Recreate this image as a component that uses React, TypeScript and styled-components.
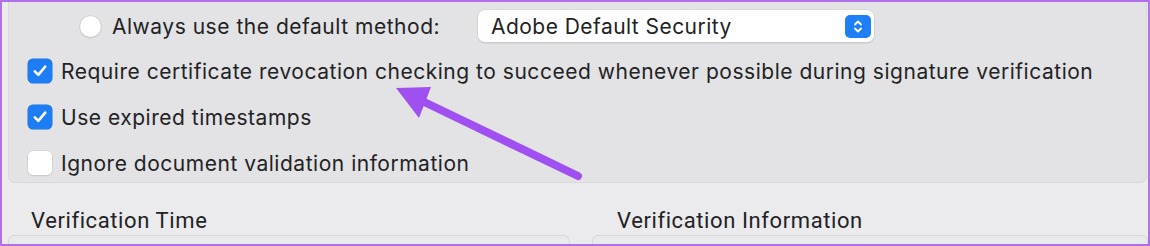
import React from "react";
import styled, { createGlobalStyle } from "styled-components";

const Global = createGlobalStyle`
  html, body { margin: 0; padding: 0; background: #ececee; }
  body { font-family: "Inter", "Liberation Sans", sans-serif; }
`;

const Frame = styled.div`
  position: relative;
  width: 1150px;
  height: 246px;
  box-sizing: border-box;
  border: 2px solid #b16fea;
  background: #ebebed;
  overflow: hidden;
  display: flex;
  flex-direction: column;
`;

const GroupBox = styled.div`
  margin: -2px 1px 0 6px;
  height: 183px;
  box-sizing: border-box;
  background: #e3e3e5;
  border: 1px solid #d9d9db;
  border-top: none;
  border-radius: 0 0 7px 7px;
  display: flex;
  flex-direction: column;
  padding: 10px 0 0 19px;
`;

const RadioRow = styled.div`
  display: flex;
  align-items: center;
  height: 32px;
  padding-left: 52px;
`;

const Radio = styled.span`
  width: 21px;
  height: 21px;
  border-radius: 50%;
  background: #ffffff;
  box-shadow: 0 0 0 0.5px #c4c4c6, 0 1px 1.5px rgba(0, 0, 0, 0.15);
  flex-shrink: 0;
`;

const Label = styled.span<{ $gap: number }>`
  margin-left: ${(p) => p.$gap}px;
  font-size: 21px;
  color: #222224;
  white-space: nowrap;
  letter-spacing: 0.52px;
`;

const Select = styled.div`
  margin-left: 38px;
  width: 396px;
  height: 32px;
  box-sizing: border-box;
  background: #ffffff;
  border-radius: 7px;
  box-shadow: 0 0 0 0.5px #cfcfd1, 0 1px 2px rgba(0, 0, 0, 0.18);
  display: flex;
  align-items: center;
  justify-content: space-between;
  padding: 0 3px 0 13px;
`;

const SelectText = styled.span`
  font-size: 21px;
  color: #222224;
  letter-spacing: 0.45px;
`;

const Stepper = styled.span`
  width: 26px;
  height: 23px;
  border-radius: 5px;
  background: #1f7ff4;
  display: flex;
  align-items: center;
  justify-content: center;
`;

const CheckRow = styled.div`
  display: flex;
  align-items: center;
  height: 46px;
`;

const Box = styled.span<{ $checked: boolean }>`
  width: 24px;
  height: 24px;
  box-sizing: border-box;
  border-radius: 5px;
  flex-shrink: 0;
  display: flex;
  align-items: center;
  justify-content: center;
  background: ${(p) => (p.$checked ? "#1c7df5" : "#ffffff")};
  box-shadow: ${(p) =>
    p.$checked
      ? "0 0 0 0.5px #1a6fd8"
      : "0 0 0 0.5px #c8c8ca, 0 1px 1.5px rgba(0,0,0,0.12)"};
`;

const Checks = styled.div`
  display: flex;
  flex-direction: column;
  margin-top: 6px;
`;

const Bottom = styled.div`
  display: grid;
  grid-template-columns: 582px 1fr;
  flex: 1;
`;

const Column = styled.div`
  display: flex;
  flex-direction: column;
`;

const ColTitle = styled.div<{ $pad: number }>`
  font-family: "Roboto", "Liberation Sans", sans-serif;
  font-size: 22px;
  letter-spacing: 0.6px;
  color: #222224;
  padding: 25px 0 0 ${(p) => p.$pad}px;
  height: 27px;
`;

const Panel = styled.div<{ $l: number; $r: number }>`
  margin: 0 ${(p) => p.$r}px 0 ${(p) => p.$l}px;
  flex: 1;
  background: #e9e9eb;
  border: 1px solid #d8d8da;
  border-bottom: none;
  border-radius: 6px 6px 0 0;
`;

const ArrowSvg = styled.svg`
  position: absolute;
  left: -2px;
  top: -2px;
  pointer-events: none;
`;

const Check = () => (
  <svg width="16" height="16" viewBox="0 0 16 16">
    <path
      d="M2.8 8.3 L6.3 11.8 L13.2 3.6"
      fill="none"
      stroke="#fff"
      strokeWidth="2.6"
      strokeLinecap="round"
      strokeLinejoin="round"
    />
  </svg>
);

const Chevrons = () => (
  <svg width="12" height="17" viewBox="0 0 12 17">
    <path
      d="M3 6.5 L6 3.5 L9 6.5 M3 10.5 L6 13.5 L9 10.5"
      fill="none"
      stroke="#fff"
      strokeWidth="1.8"
      strokeLinecap="round"
      strokeLinejoin="round"
    />
  </svg>
);

const items: { label: string; checked: boolean }[] = [
  {
    label:
      "Require certificate revocation checking to succeed whenever possible during signature verification",
    checked: true,
  },
  { label: "Use expired timestamps", checked: true },
  { label: "Ignore document validation information", checked: false },
];

export default function App() {
  return (
    <>
      <Global />
      <Frame>
        <GroupBox>
          <RadioRow>
            <Radio />
            <Label $gap={11}>Always use the default method:</Label>
            <Select>
              <SelectText>Adobe Default Security</SelectText>
              <Stepper>
                <Chevrons />
              </Stepper>
            </Select>
          </RadioRow>
          <Checks>
            {items.map((it) => (
              <CheckRow key={it.label}>
                <Box $checked={it.checked}>{it.checked && <Check />}</Box>
                <Label $gap={9}>{it.label}</Label>
              </CheckRow>
            ))}
          </Checks>
        </GroupBox>
        <Bottom>
          <Column>
            <ColTitle $pad={29}>Verification Time</ColTitle>
            <Panel $l={6} $r={14} />
          </Column>
          <Column>
            <ColTitle $pad={33}>Verification Information</ColTitle>
            <Panel $l={8} $r={0} />
          </Column>
        </Bottom>
        <ArrowSvg width="1150" height="246" viewBox="0 0 1150 246">
          <path d="M396 88 L431 87 L419 118 Z" fill="#a04ff0" />
          <path
            d="M418 99 L578 176"
            stroke="#a04ff0"
            strokeWidth="8"
            strokeLinecap="round"
          />
        </ArrowSvg>
      </Frame>
    </>
  );
}
